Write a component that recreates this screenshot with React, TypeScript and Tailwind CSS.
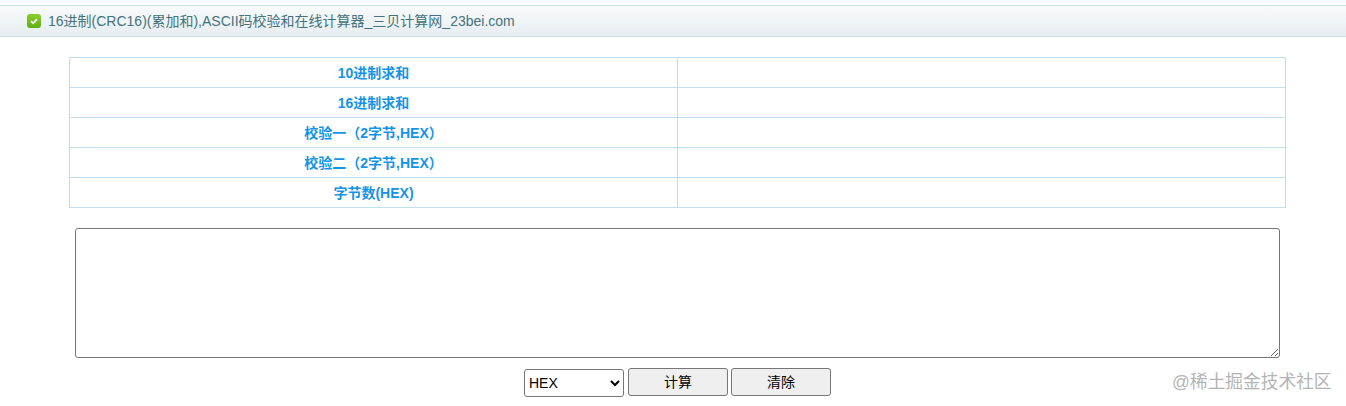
import React from 'react';

const rows = ['10进制求和', '16进制求和', '校验一（2字节,HEX）', '校验二（2字节,HEX）', '字节数(HEX)'];

const App = () => {
  return (
    <div className="relative h-[406px] w-[1346px] overflow-hidden bg-white font-['Liberation_Sans','Noto_Sans_CJK_SC',sans-serif]">
      {/* Title bar */}
      <div className="pt-[5px]">
        <div className="flex h-[32px] items-center gap-[7px] border-y border-[#c5e3e6] bg-gradient-to-b from-[#f9fbfb] to-[#e6edf0] pl-[27px]">
          <span className="flex h-[14px] w-[14px] items-center justify-center rounded-[3px] bg-gradient-to-b from-[#8ccf2a] to-[#5fae14]">
            <svg viewBox="0 0 14 14" className="h-[14px] w-[14px]" fill="none">
              <path d="M4 7.2 L6.2 9.3 L10 5.2" stroke="#fff" strokeWidth="1.8" />
            </svg>
          </span>
          <span className="text-[14px] text-[#44727f]">16进制(CRC16)(累加和),ASCII码校验和在线计算器_三贝计算网_23bei.com</span>
        </div>
      </div>

      {/* Result table */}
      <div className="ml-[69px] mt-[20px] w-[1217px]">
        <table className="w-full table-fixed border-collapse">
          <tbody>
            {rows.map((label) => (
              <tr key={label} className="h-[30px]">
                <td className="w-[608px] border border-[#c0deef] p-0 pt-[1px] text-center text-[14px] font-bold text-[#1494e8]">{label}</td>
                <td className="border border-[#c0deef] p-0"></td>
              </tr>
            ))}
          </tbody>
        </table>
      </div>

      {/* Input */}
      <div className="ml-[75px] mt-[20px] w-[1205px]">
        <textarea className="block h-[130px] w-full rounded-[3px] border border-[#767676] bg-white" />
      </div>

      {/* Controls */}
      <div className="mt-[10px] flex items-start justify-center gap-[3px] pl-[9px] text-[14px] text-black">
        <select className="mr-[1px] mt-[1px] h-[28px] w-[100px] rounded-[3px] border border-[#767676] bg-white text-[14px]">
          <option>HEX</option>
          <option>ASCII</option>
        </select>
        <button className="h-[28px] w-[100px] rounded-[3px] border border-[#767676] bg-[#efefef] text-[14px]">计算</button>
        <button className="h-[28px] w-[100px] rounded-[3px] border border-[#767676] bg-[#efefef] text-[14px]">清除</button>
      </div>

      {/* Watermark */}
      <div className="absolute left-[1172px] top-[371px] text-[17.7px] leading-[22px] text-[#b4b4b4]">@稀土掘金技术社区</div>
    </div>
  );
};

export default App;
